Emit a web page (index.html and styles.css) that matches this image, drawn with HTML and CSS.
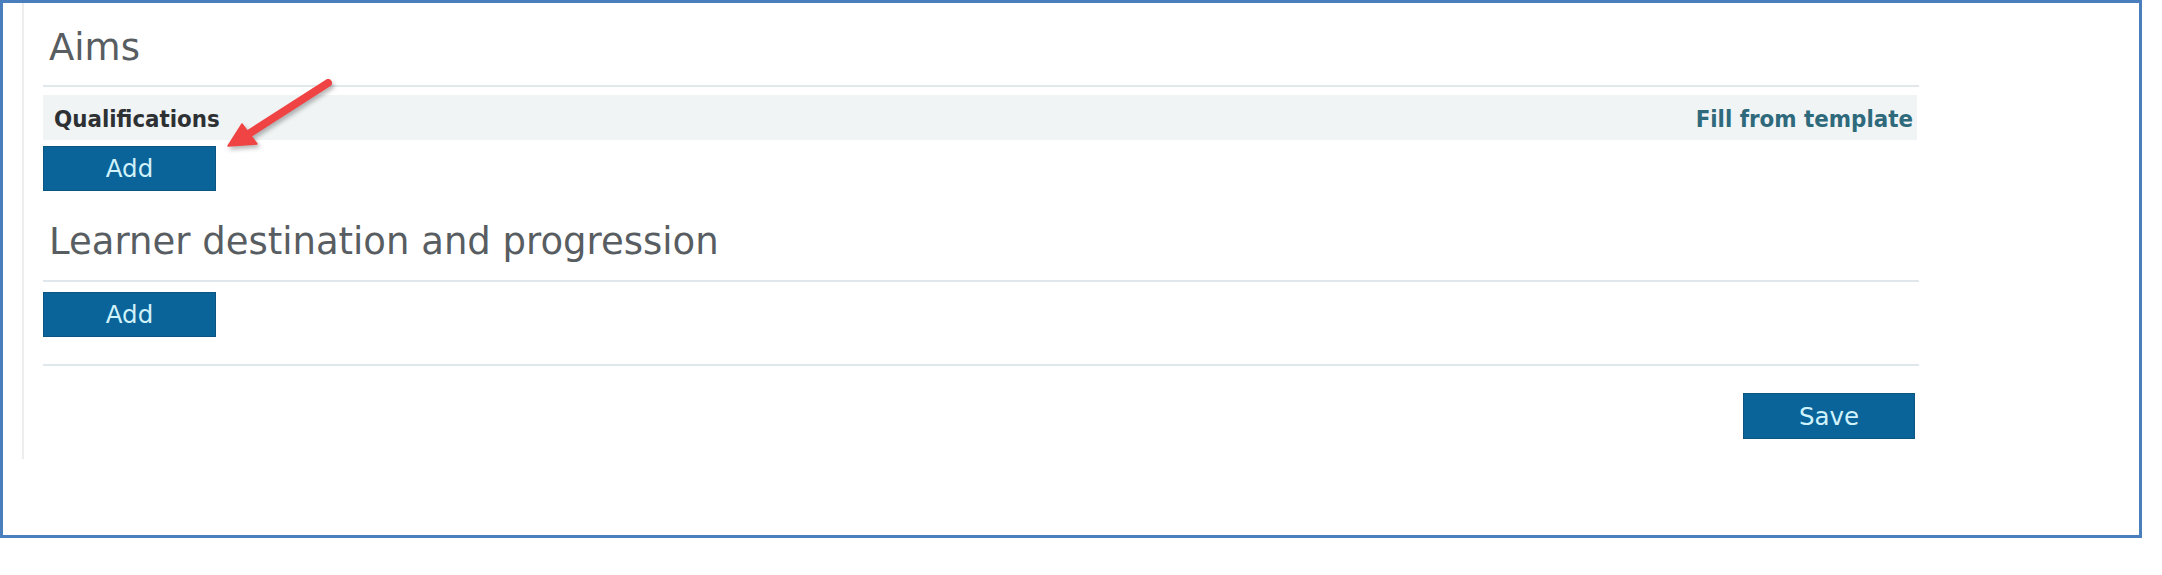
FILE: index.html
```html
<!DOCTYPE html>
<html lang="en">
<head>
<meta charset="utf-8">
<title>Aims</title>
<link rel="stylesheet" href="styles.css">
</head>
<body>
<div class="frame">
  <div class="panel">
    <div class="content">
      <h2 class="section-title">Aims</h2>
      <div class="divider"></div>
      <div class="subhead">
        <span class="subhead-label">Qualifications</span>
        <a class="subhead-link" href="#">Fill from template</a>
      </div>
      <button class="btn btn-add-1" type="button">Add</button>
      <h2 class="section-title section-title-learner">Learner destination and progression</h2>
      <div class="divider divider-2"></div>
      <button class="btn btn-add-2" type="button">Add</button>
      <div class="divider divider-3"></div>
      <div class="actions">
        <button class="btn" type="button">Save</button>
      </div>
    </div>
  </div>
  <svg class="arrow" viewBox="200 60 150 110" width="150" height="110" aria-hidden="true">
    <line x1="328" y1="83" x2="247" y2="135" stroke="#f04444" stroke-width="8" stroke-linecap="round"/>
    <polygon points="228,146 242,124 257,144" fill="#f04444" stroke="#f04444" stroke-width="1.5" stroke-linejoin="round"/>
  </svg>
</div>
</body>
</html>
```

FILE: styles.css
```css
html, body {
  margin: 0;
  padding: 0;
  background: #ffffff;
}

.frame {
  position: relative;
  box-sizing: border-box;
  width: 2142px;
  height: 538px;
  border: 3px solid #4a7fbd;
  background: #ffffff;
}

.panel {
  margin-left: 19px;
  border-left: 2px solid #ededed;
  padding-left: 19px;
  padding-bottom: 20px;
}

.content {
  width: 1876px;
  display: flex;
  flex-direction: column;
  align-items: flex-start;
  font-family: "DejaVu Sans", Verdana, sans-serif;
}

.section-title {
  margin: 24px 0 0 0;
  padding-left: 6px;
  font-family: "DejaVu Sans", Verdana, sans-serif;
  font-weight: normal;
  font-size: 37px;
  line-height: 42px;
  color: #585d62;
}

.section-title-learner {
  margin-top: 30px;
}

.divider {
  align-self: stretch;
  height: 2px;
  margin-top: 16px;
  background: #e0e8ec;
}

.divider-2 {
  margin-top: 17px;
}

.divider-3 {
  margin-top: 27px;
}

.subhead {
  align-self: stretch;
  box-sizing: border-box;
  margin-top: 8px;
  margin-right: 2px;
  height: 45px;
  padding: 3px 4px 0 11px;
  display: flex;
  align-items: center;
  justify-content: space-between;
  background: #f1f4f5;
  font-family: "DejaVu Sans Condensed", "DejaVu Sans", sans-serif;
  font-weight: bold;
  font-size: 23.8px;
}

.subhead-label {
  color: #2e3134;
}

.subhead-link {
  color: #2e6a7c;
  text-decoration: none;
}

.btn {
  box-sizing: border-box;
  width: 173px;
  height: 45px;
  margin: 6px 0 0 0;
  padding: 0;
  border: 1px solid #0b5583;
  background: #0a6399;
  color: #d0f2fb;
  font-family: "DejaVu Sans", Verdana, sans-serif;
  font-size: 24.5px;
  line-height: 41px;
  text-align: center;
  cursor: pointer;
}

.btn-add-2 {
  margin-top: 10px;
}

.actions {
  align-self: stretch;
  margin-top: 27px;
  display: flex;
  justify-content: flex-end;
  padding-right: 4px;
}

.actions .btn {
  width: 172px;
  height: 46px;
  margin-top: 0;
  line-height: 43px;
}

.arrow {
  position: absolute;
  left: 197px;
  top: 57px;
  overflow: visible;
  filter: drop-shadow(2px 3px 2px rgba(0, 0, 0, 0.28));
}
```
